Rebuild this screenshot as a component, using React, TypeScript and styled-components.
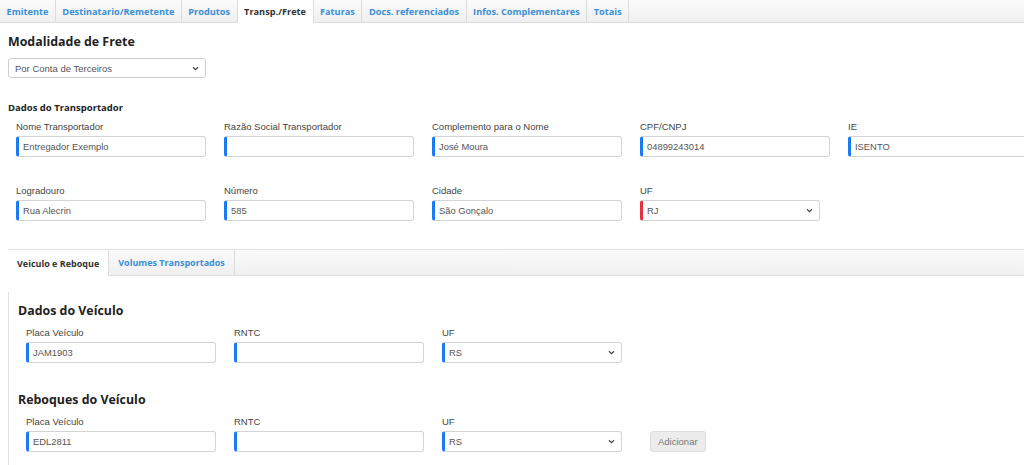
import React from 'react'
import styled, { createGlobalStyle } from 'styled-components'

const GlobalStyle = createGlobalStyle`
  body {
    margin: 0;
    background: #fff;
    font-family: "Liberation Sans", Arial, sans-serif;
    color: #333;
  }
`

const topTabs = [
  'Emitente',
  'Destinatario/Remetente',
  'Produtos',
  'Transp./Frete',
  'Faturas',
  'Docs. referenciados',
  'Infos. Complementares',
  'Totais',
]

type Field = { label: string; value?: string; select?: boolean; alert?: boolean }

const transportador: Field[] = [
  { label: 'Nome Transportador', value: 'Entregador Exemplo' },
  { label: 'Razão Social Transportador' },
  { label: 'Complemento para o Nome', value: 'José Moura' },
  { label: 'CPF/CNPJ', value: '04899243014' },
  { label: 'IE', value: 'ISENTO' },
  { label: 'Logradouro', value: 'Rua Alecrin' },
  { label: 'Número', value: '585' },
  { label: 'Cidade', value: 'São Gonçalo' },
  { label: 'UF', value: 'RJ', select: true, alert: true },
]

const Chevron = () => (
  <svg width="7" height="5" viewBox="0 0 8 6">
    <path d="M1 1.5 L4 4.5 L7 1.5" fill="none" stroke="#444" strokeWidth="1.4" />
  </svg>
)

const InputBox: React.FC<{ field: Field }> = ({ field }) => (
  <FieldWrap>
    <Label>{field.label}</Label>
    <Input $alert={field.alert} $width={field.select ? 180 : 190}>
      <span>{field.value}</span>
      {field.select && <Chevron />}
    </Input>
  </FieldWrap>
)

export default function App() {
  return (
    <>
      <GlobalStyle />
      <TabBar>
        {topTabs.map((t) => (
          <TopTab key={t} $active={t === 'Transp./Frete'}>
            {t}
          </TopTab>
        ))}
      </TabBar>
      <Page>
        <Title>Modalidade de Frete</Title>
        <PlainSelect>
          <span>Por Conta de Terceiros</span>
          <Chevron />
        </PlainSelect>

        <SmallTitle>Dados do Transportador</SmallTitle>
        <Grid>
          {transportador.map((f) => (
            <InputBox key={f.label} field={f} />
          ))}
        </Grid>

        <SubTabBar>
          <SubTab $active>Veiculo e Reboque</SubTab>
          <SubTab>Volumes Transportados</SubTab>
        </SubTabBar>

        <Panel>
          <PanelTitle>Dados do Veículo</PanelTitle>
          <Row>
            <InputBox field={{ label: 'Placa Veículo', value: 'JAM1903' }} />
            <InputBox field={{ label: 'RNTC' }} />
            <InputBox field={{ label: 'UF', value: 'RS', select: true }} />
          </Row>

          <PanelTitle $spaced>Reboques do Veículo</PanelTitle>
          <Row>
            <InputBox field={{ label: 'Placa Veículo', value: 'EDL2811' }} />
            <InputBox field={{ label: 'RNTC' }} />
            <InputBox field={{ label: 'UF', value: 'RS', select: true }} />
            <AddButton>Adicionar</AddButton>
          </Row>
        </Panel>
      </Page>
    </>
  )
}

const TabBar = styled.div`
  display: flex;
  height: 22px;
  background: linear-gradient(#fbfbfb, #efefef);
  border-bottom: 1px solid #dcdcdc;
`

const TopTab = styled.div<{ $active?: boolean }>`
  display: flex;
  align-items: center;
  padding: 0 6.5px;
  height: ${(p) => (p.$active ? '23px' : '22px')};
  border-right: 1px solid #dcdcdc;
  background: ${(p) => (p.$active ? '#fff' : 'transparent')};
  color: ${(p) => (p.$active ? '#333' : '#3a8fd4')};
  font-family: "Open Sans", sans-serif;
  font-weight: 700;
  font-size: 9.2px;
  white-space: nowrap;
`

const Page = styled.div`
  padding: 0 0 0 8px;
`

const Title = styled.h2`
  margin: 10px 0 7px;
  font-family: "Open Sans", sans-serif;
  font-size: 12.4px;
  font-weight: 700;
  color: #222;
  line-height: 18px;
`

const PlainSelect = styled.div`
  display: flex;
  align-items: center;
  justify-content: space-between;
  box-sizing: border-box;
  width: 198px;
  height: 20px;
  padding: 0 6px 0 6px;
  border: 1px solid #cfcfcf;
  border-radius: 3px;
  font-size: 9.5px;
  color: #555;
`

const SmallTitle = styled.h4`
  margin: 23px 0 6px;
  font-family: "Open Sans", sans-serif;
  font-size: 9.5px;
  font-weight: 700;
  color: #222;
  line-height: 14px;
`

const Grid = styled.div`
  display: grid;
  grid-template-columns: repeat(5, 190px);
  column-gap: 18px;
  row-gap: 28px;
  padding-left: 8px;
`

const FieldWrap = styled.div`
  display: flex;
  flex-direction: column;
`

const Label = styled.label`
  font-size: 9.5px;
  line-height: 12px;
  color: #444;
  margin-bottom: 3px;
`

const Input = styled.div<{ $alert?: boolean; $width?: number }>`
  display: flex;
  align-items: center;
  justify-content: space-between;
  box-sizing: border-box;
  width: ${(p) => p.$width ?? 190}px;
  height: 21px;
  padding: 0 6px 0 4px;
  border: 1px solid #d4d4d4;
  border-left: 3px solid ${(p) => (p.$alert ? '#e2323f' : '#1a7bf2')};
  border-radius: 3px;
  font-size: 9.4px;
  color: #555;
`

const SubTabBar = styled.div`
  display: flex;
  margin-top: 28px;
  height: 25px;
  border-top: 1px solid #e2e2e2;
  border-bottom: 1px solid #dcdcdc;
  background: linear-gradient(#fbfbfb, #efefef);
`

const SubTab = styled.div<{ $active?: boolean }>`
  display: flex;
  align-items: center;
  padding: 0 9px;
  height: ${(p) => (p.$active ? '26px' : '25px')};
  border-right: 1px solid #dcdcdc;
  background: ${(p) => (p.$active ? '#fff' : 'transparent')};
  color: ${(p) => (p.$active ? '#333' : '#3a8fd4')};
  font-family: "Open Sans", sans-serif;
  font-weight: 700;
  font-size: 9px;
  white-space: nowrap;
`

const Panel = styled.div`
  margin-top: 16px;
  padding: 10px 0 20px 9px;
  border-left: 1px solid #e2e2e2;
`

const PanelTitle = styled.h3<{ $spaced?: boolean }>`
  margin: ${(p) => (p.$spaced ? '28px' : '0')} 0 7px;
  font-family: "Open Sans", sans-serif;
  font-size: 12.4px;
  font-weight: 700;
  color: #222;
  line-height: 18px;
`

const Row = styled.div`
  display: flex;
  align-items: flex-end;
  gap: 18px;
  padding-left: 8px;
`

const AddButton = styled.button`
  margin-left: 10px;
  height: 21px;
  padding: 0 7px;
  border: 1px solid #ddd;
  border-radius: 3px;
  background: #ececec;
  color: #777;
  font-family: "Liberation Sans", Arial, sans-serif;
  font-size: 9.5px;
`
